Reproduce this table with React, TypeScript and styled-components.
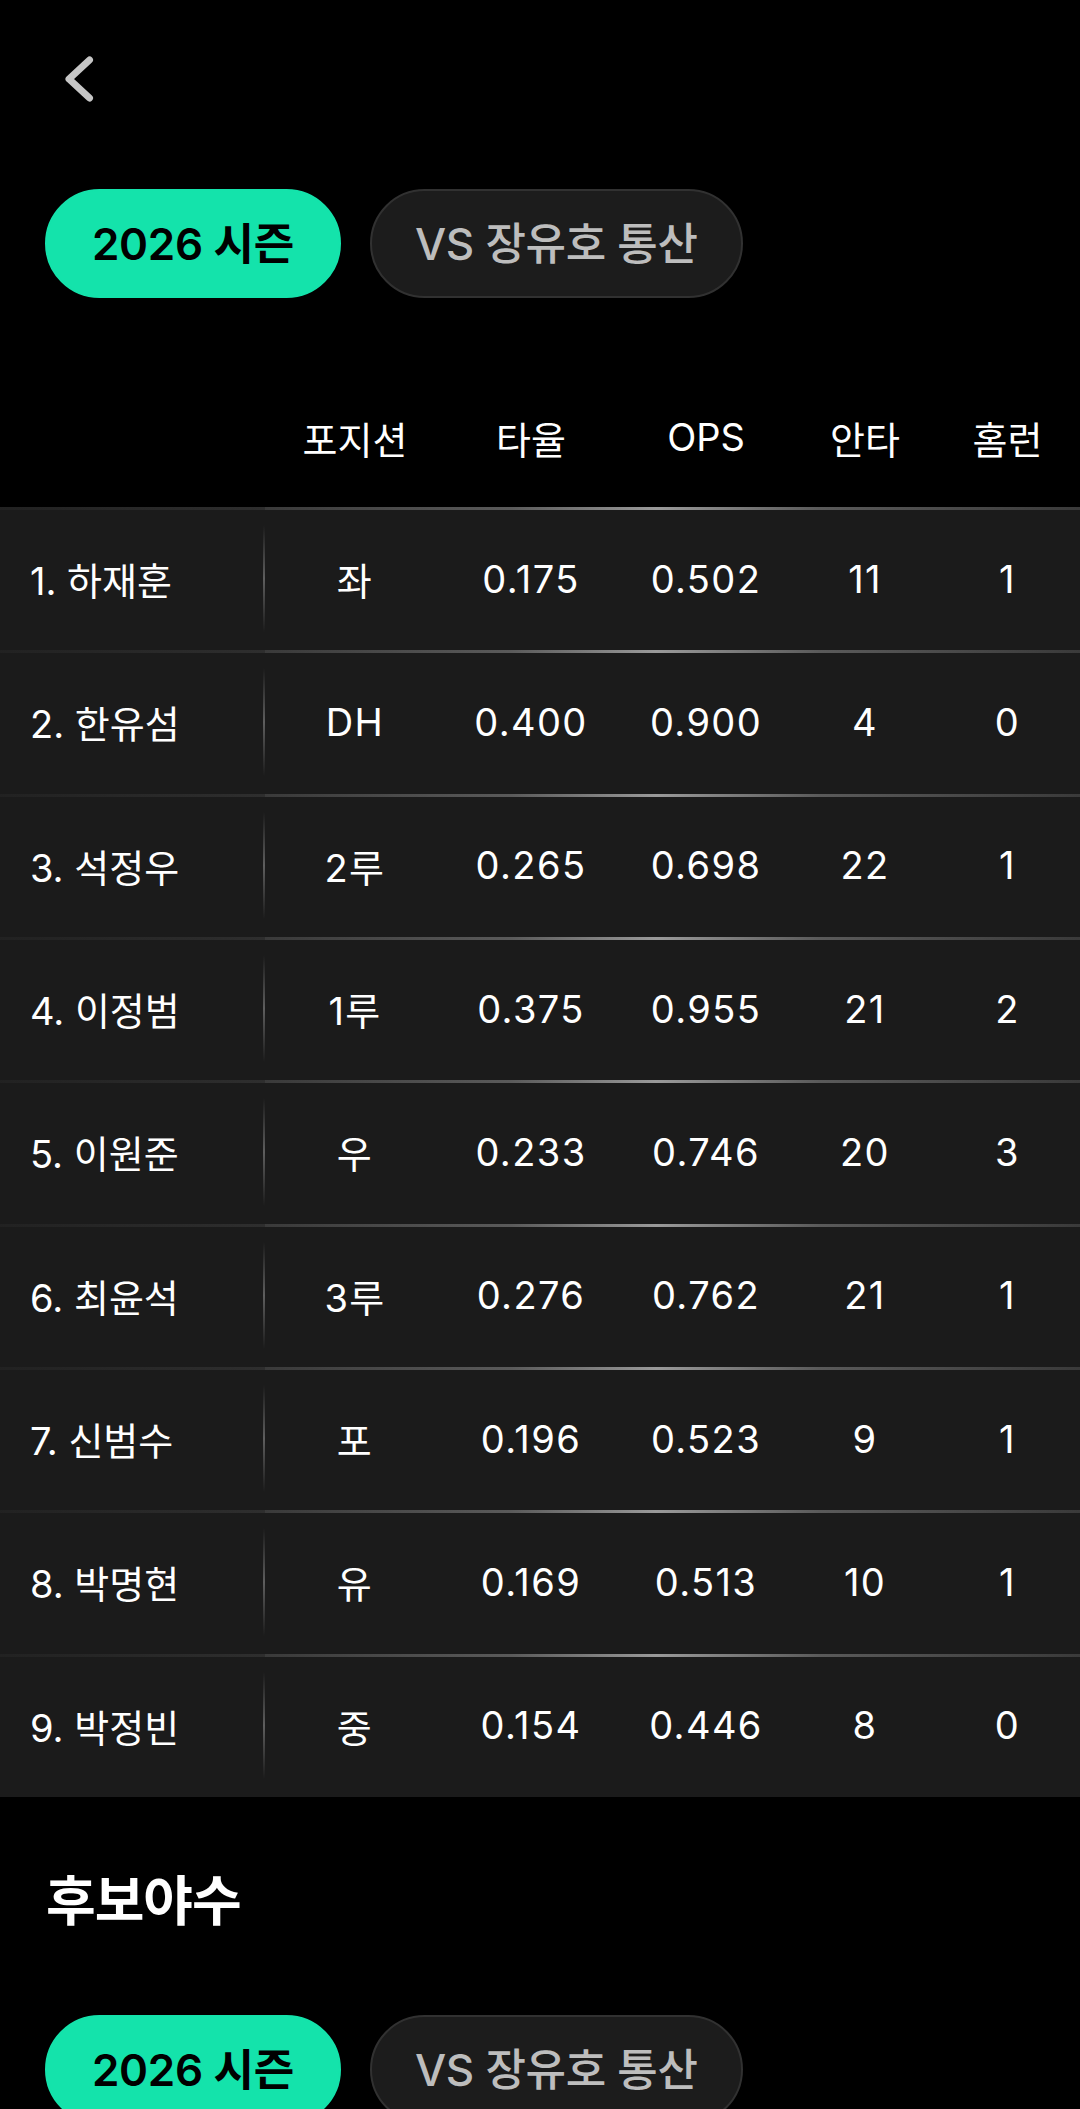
import React from "react";
import styled, { createGlobalStyle } from "styled-components";

const GlobalStyle = createGlobalStyle`
  html, body {
    margin: 0;
    padding: 0;
    background: #000;
  }
  body {
    font-family: Inter, "Noto Sans CJK KR", "Noto Sans", sans-serif;
    color: #fff;
    -webkit-font-smoothing: antialiased;
  }
  * { box-sizing: border-box; }
`;

const Page = styled.div`
  width: 1080px;
  min-height: 2109px;
  background: #000;
  overflow: hidden;
  display: flex;
  flex-direction: column;
`;

const TopBar = styled.div`
  height: 158px;
  display: flex;
  align-items: center;
  padding-left: 64px;
`;

const BackButton = styled.button`
  border: none;
  background: none;
  padding: 0;
  width: 30px;
  height: 46px;
  display: flex;
  cursor: pointer;
`;

const Tabs = styled.div<{ $top: number; $bottom: number }>`
  display: flex;
  gap: 29px;
  padding: ${(p) => p.$top}px 45px ${(p) => p.$bottom}px;
`;

const Pill = styled.button<{ $active?: boolean }>`
  height: 109px;
  padding: 0 ${(p) => (p.$active ? 45 : 43)}px 5px;
  border-radius: 55px;
  font-family: Inter, "Noto Sans CJK KR", sans-serif;
  font-size: 44px;
  font-weight: ${(p) => (p.$active ? 600 : 500)};
  letter-spacing: -0.3px;
  display: flex;
  align-items: center;
  justify-content: center;
  cursor: pointer;
  background: ${(p) => (p.$active ? "#14e3ab" : "#1c1c1c")};
  color: ${(p) => (p.$active ? "#000" : "#bdbdbd")};
  border: 2px solid ${(p) => (p.$active ? "#14e3ab" : "#313131")};
`;

const COLS = "265px 180px 172px 178px 140px 145px";

const HeaderRow = styled.div`
  display: grid;
  grid-template-columns: ${COLS};
  height: 140px;
  align-items: center;
`;

const HeaderCell = styled.div`
  text-align: center;
  font-size: 38px;
  font-weight: 400;
  color: #fff;
`;

const Table = styled.div`
  background: #1b1b1b;
  display: flex;
  flex-direction: column;
`;

const Row = styled.div`
  position: relative;
  display: grid;
  grid-template-columns: ${COLS};
  height: 143.33px;
  align-items: center;

  &::before {
    content: "";
    position: absolute;
    left: 0;
    top: 0;
    width: 265px;
    height: 3px;
    background: linear-gradient(to right, rgba(60, 60, 60, 0.2), #2e2e2e);
  }
  &::after {
    content: "";
    position: absolute;
    left: 265px;
    right: 0;
    top: 0;
    height: 3px;
    background: linear-gradient(
      to right,
      #3a3a3a 0%,
      #5a5a5a 30%,
      #9a9a9a 48%,
      #5a5a5a 68%,
      #3a3a3a 100%
    );
  }
`;

const NameCell = styled.div`
  position: relative;
  height: 100%;
  display: flex;
  align-items: center;
  padding-left: 30px;
  font-size: 38px;
  color: #fff;

  &::after {
    content: "";
    position: absolute;
    right: 0;
    top: 18px;
    bottom: 18px;
    width: 2px;
    background: linear-gradient(
      to bottom,
      rgba(90, 90, 90, 0),
      #5e5e5e 50%,
      rgba(90, 90, 90, 0)
    );
  }
`;

const Cell = styled.div`
  text-align: center;
  font-size: 38px;
  letter-spacing: 1.4px;
  color: #fff;
`;

const SectionTitle = styled.h2`
  margin: 74px 0 0;
  padding-left: 46px;
  font-size: 54px;
  font-weight: 700;
  line-height: 62px;
  color: #fff;
  letter-spacing: -1px;
`;

const ChevronLeft = () => (
  <svg width="30" height="46" viewBox="0 0 30 46" fill="none">
    <path
      d="M25.5 4 L5 23 L25.5 42"
      stroke="#c6c6c6"
      strokeWidth="7"
      strokeLinecap="round"
      strokeLinejoin="round"
    />
  </svg>
);

type Player = {
  name: string;
  pos: string;
  avg: string;
  ops: string;
  hits: number;
  hr: number;
};

const players: Player[] = [
  { name: "1. 하재훈", pos: "좌", avg: "0.175", ops: "0.502", hits: 11, hr: 1 },
  { name: "2. 한유섬", pos: "DH", avg: "0.400", ops: "0.900", hits: 4, hr: 0 },
  { name: "3. 석정우", pos: "2루", avg: "0.265", ops: "0.698", hits: 22, hr: 1 },
  { name: "4. 이정범", pos: "1루", avg: "0.375", ops: "0.955", hits: 21, hr: 2 },
  { name: "5. 이원준", pos: "우", avg: "0.233", ops: "0.746", hits: 20, hr: 3 },
  { name: "6. 최윤석", pos: "3루", avg: "0.276", ops: "0.762", hits: 21, hr: 1 },
  { name: "7. 신범수", pos: "포", avg: "0.196", ops: "0.523", hits: 9, hr: 1 },
  { name: "8. 박명현", pos: "유", avg: "0.169", ops: "0.513", hits: 10, hr: 1 },
  { name: "9. 박정빈", pos: "중", avg: "0.154", ops: "0.446", hits: 8, hr: 0 },
];

const headers = ["", "포지션", "타율", "OPS", "안타", "홈런"];

export default function App() {
  return (
    <>
      <GlobalStyle />
      <Page>
        <TopBar>
          <BackButton aria-label="뒤로">
            <ChevronLeft />
          </BackButton>
        </TopBar>
        <Tabs $top={31} $bottom={69}>
          <Pill $active>2026 시즌</Pill>
          <Pill>VS 장유호 통산</Pill>
        </Tabs>
        <HeaderRow>
          {headers.map((h, i) => (
            <HeaderCell key={i}>{h}</HeaderCell>
          ))}
        </HeaderRow>
        <Table>
          {players.map((p) => (
            <Row key={p.name}>
              <NameCell>{p.name}</NameCell>
              <Cell>{p.pos}</Cell>
              <Cell>{p.avg}</Cell>
              <Cell>{p.ops}</Cell>
              <Cell>{p.hits}</Cell>
              <Cell>{p.hr}</Cell>
            </Row>
          ))}
        </Table>
        <SectionTitle>후보야수</SectionTitle>
        <Tabs $top={82} $bottom={0}>
          <Pill $active>2026 시즌</Pill>
          <Pill>VS 장유호 통산</Pill>
        </Tabs>
      </Page>
    </>
  );
}
